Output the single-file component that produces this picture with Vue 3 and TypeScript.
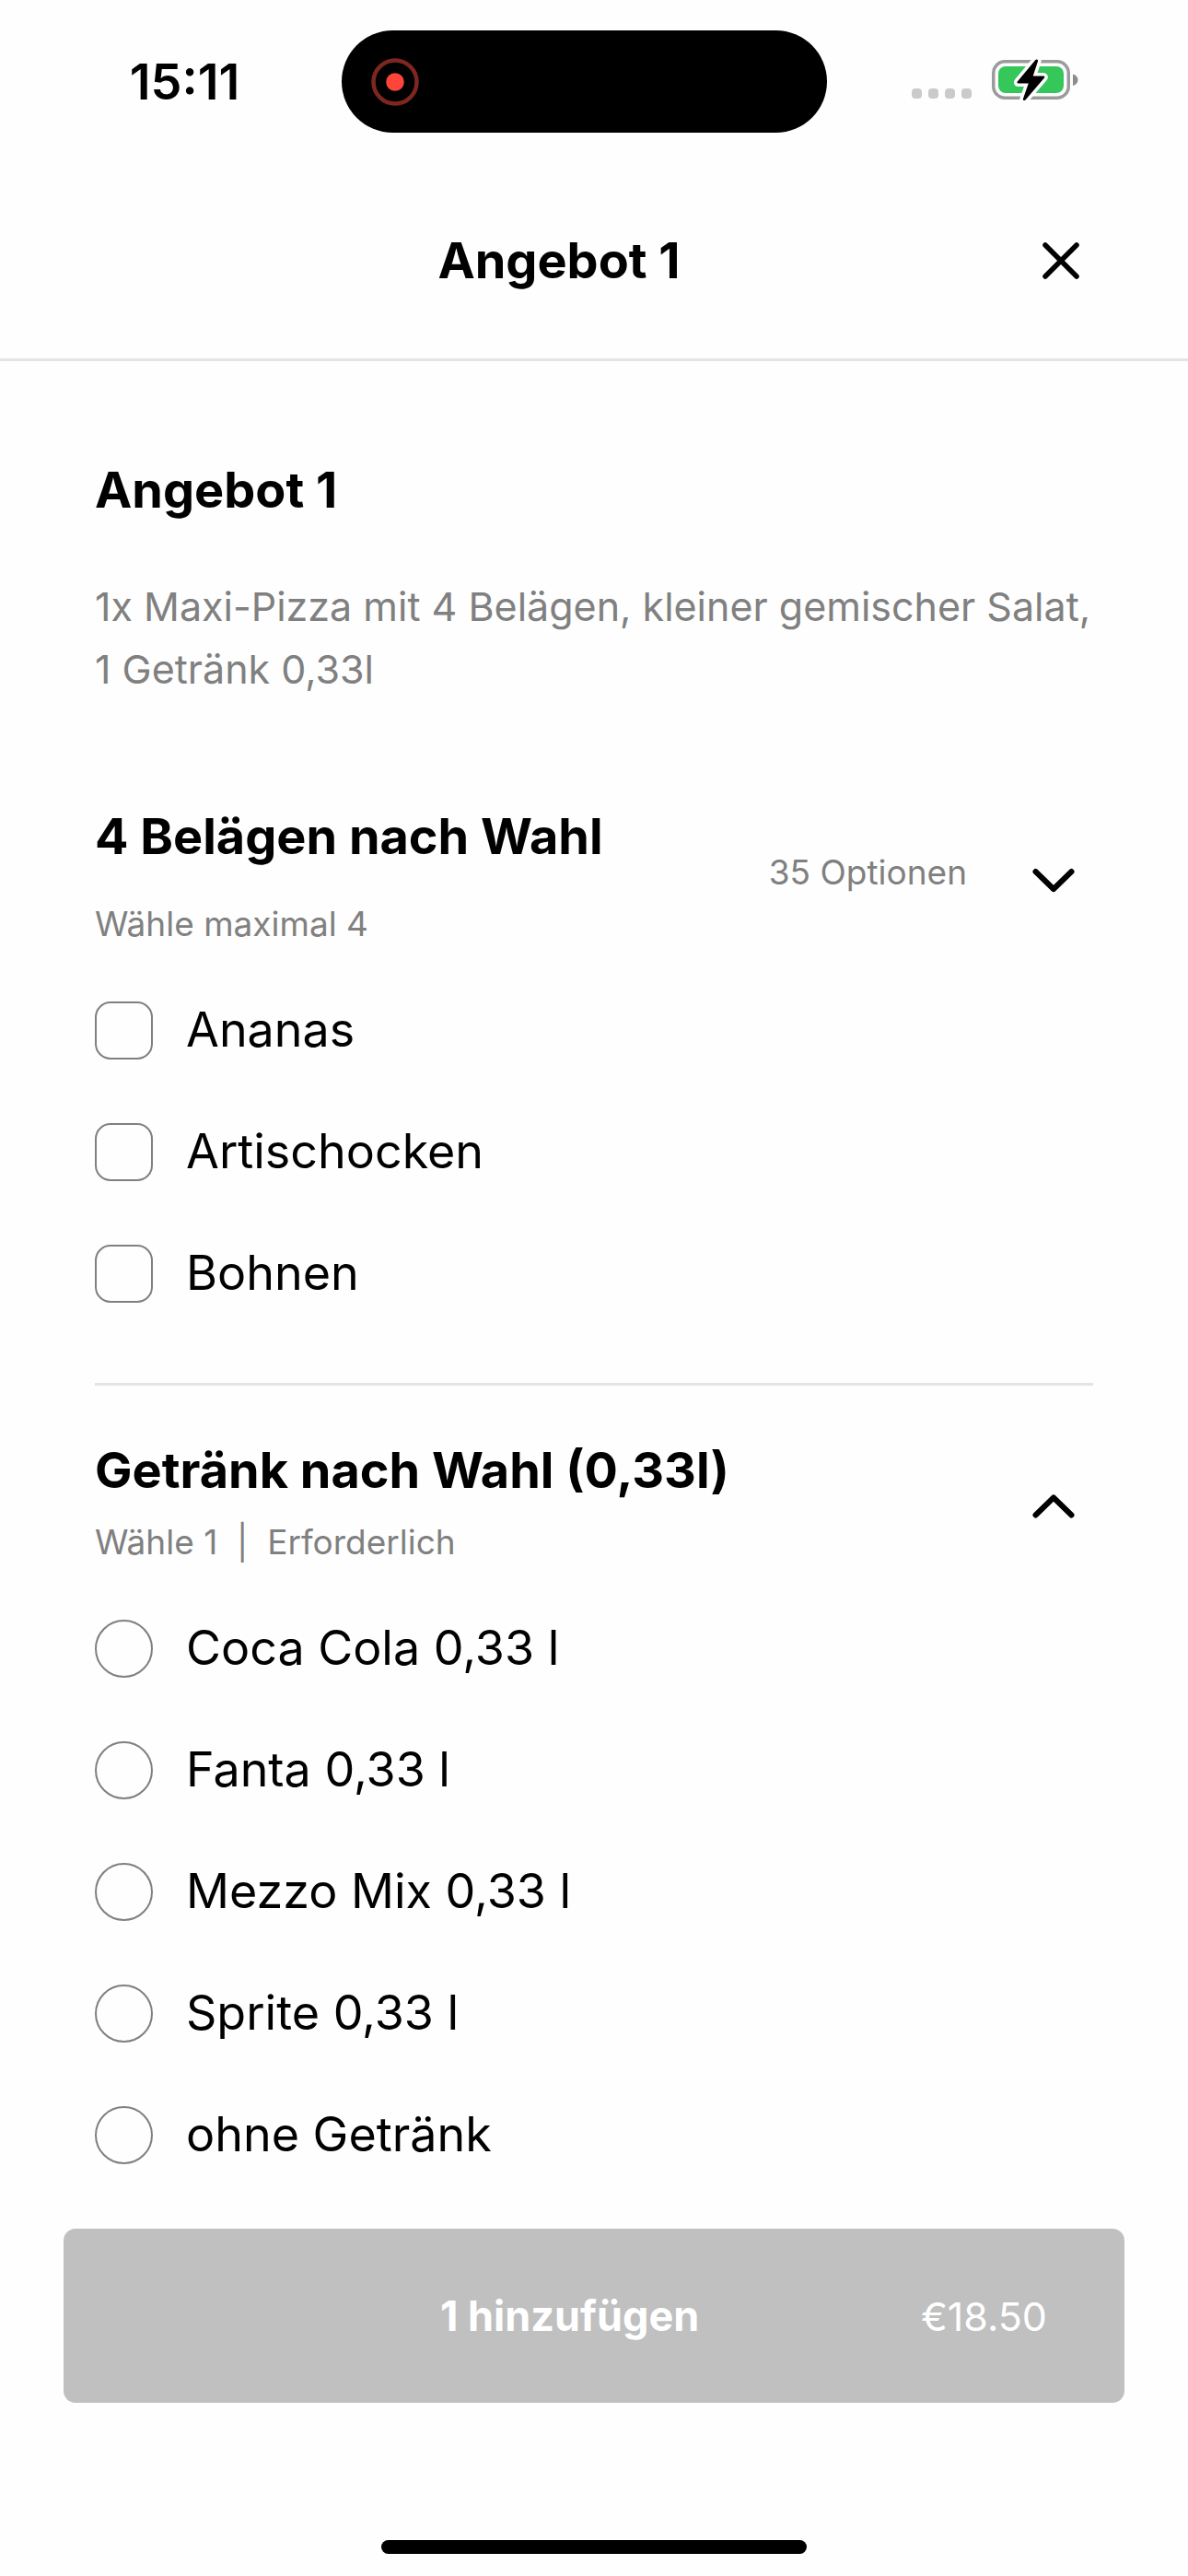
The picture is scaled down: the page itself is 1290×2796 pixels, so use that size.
<script setup lang="ts">
import { computed, ref } from 'vue'

interface OptionGroup {
  id: string
  title: string
  hint: string
  type: 'checkbox' | 'radio'
  count?: string
  expanded: boolean
  options: string[]
}

const groups = ref<OptionGroup[]>([
  {
    id: 'belaege',
    title: '4 Belägen nach Wahl',
    hint: 'Wähle maximal 4',
    type: 'checkbox',
    count: '35 Optionen',
    expanded: false,
    options: ['Ananas', 'Artischocken', 'Bohnen'],
  },
  {
    id: 'getraenk',
    title: 'Getränk nach Wahl (0,33l)',
    hint: 'Wähle 1\u00a0\u00a0|\u00a0\u00a0Erforderlich',
    type: 'radio',
    expanded: true,
    options: ['Coca Cola 0,33 l', 'Fanta 0,33 l', 'Mezzo Mix 0,33 l', 'Sprite 0,33 l', 'ohne Getränk'],
  },
])

const toppings = ref<string[]>([])
const drink = ref('')
const canAdd = computed(() => drink.value !== '')

const visible = (g: OptionGroup) => (g.expanded ? g.options : g.options.slice(0, 3))
</script>

<template>
  <div class="screen">
    <div class="status">
      <span class="time">15:11</span>
      <div class="island">
        <svg width="52" height="52" viewBox="0 0 52 52" aria-hidden="true">
          <circle cx="26" cy="26" r="23.5" fill="none" stroke="#7e2720" stroke-width="4.5" />
          <circle cx="26" cy="26" r="9.8" fill="#ff453a" />
        </svg>
      </div>
      <div class="indicators">
        <svg width="66" height="48" viewBox="0 0 66 48" fill="#cacaca" aria-hidden="true">
          <rect x="0" y="33" width="11" height="11" rx="4" />
          <rect x="18" y="33" width="11" height="11" rx="4" />
          <rect x="36" y="33" width="11" height="11" rx="4" />
          <rect x="54" y="33" width="11" height="11" rx="4" />
        </svg>
        <svg width="95" height="48" viewBox="0 0 95 48" aria-hidden="true">
          <rect x="1.75" y="3.75" width="81.5" height="39.5" rx="12.5" fill="none" stroke="#9b9b9b" stroke-width="3.5" />
          <rect x="7" y="9" width="71" height="29" rx="8" fill="#35c759" />
          <path d="M88 17.5c3.600 1.200 5.500 3.400 5.500 6.300s-1.900 5.200-5.500 6.400z" fill="#8c8c8c" />
          <path
            d="M47.200 2.200 27.800 25.600c-.8 1-.3 2 1 2h11l-5.800 16.300c-.7 2 1.400 3 2.700 1.400L57 21.600c.8-1 .3-2-1-2H44.700L50 3.600c.6-2-1.400-3-2.800-1.400z"
            fill="#000"
            stroke="#fefefe"
            stroke-width="7"
            stroke-linejoin="round"
            paint-order="stroke"
          />
        </svg>
      </div>
    </div>

    <header class="header">
      <h2 class="heading">Angebot 1</h2>
      <button type="button" class="close" aria-label="Schließen">
        <svg width="44" height="44" viewBox="0 0 44 44" fill="none" stroke="#000" stroke-width="5.500" stroke-linecap="round" aria-hidden="true">
          <path d="M5 5 39 39M39 5 5 39" />
        </svg>
      </button>
    </header>

    <main class="content">
      <h1 class="heading">Angebot 1</h1>
      <p class="description">1x Maxi-Pizza mit 4 Belägen, kleiner gemischer Salat, 1 Getränk 0,33l</p>

      <section v-for="g in groups" :key="g.id" class="group" :class="g.type">
        <div class="group-head">
          <div class="group-titles">
            <h3 :id="g.id" class="heading">{{ g.title }}</h3>
            <p class="hint">{{ g.hint }}</p>
          </div>
          <button type="button" class="toggle" :aria-expanded="g.expanded" :aria-labelledby="g.id" @click="g.expanded = !g.expanded">
            <span v-if="g.count" class="count">{{ g.count }}</span>
            <svg width="48" height="48" viewBox="0 0 48 48" fill="none" stroke="#000" stroke-width="6" stroke-linecap="round" stroke-linejoin="round" aria-hidden="true">
              <path :d="g.expanded ? 'M4.500 37.500 24 18.500 43.500 37.500' : 'M4.500 18 24 37 43.500 18'" />
            </svg>
          </button>
        </div>
        <ul class="options">
          <li v-for="o in visible(g)" :key="o">
            <label class="option">
              <input v-if="g.type === 'checkbox'" v-model="toppings" type="checkbox" :value="o" />
              <input v-else v-model="drink" type="radio" :name="g.id" :value="o" />
              <span>{{ o }}</span>
            </label>
          </li>
        </ul>
      </section>
    </main>

    <footer class="footer">
      <button type="button" class="add" :disabled="!canAdd">
        <span class="add-label">1 hinzufügen</span>
        <span class="price">€18.50</span>
      </button>
      <div class="home"></div>
    </footer>
  </div>
</template>

<style>
body {
  margin: 0;
  background: #fefefe;
}
</style>

<style scoped>
.screen {
  display: flex;
  flex-direction: column;
  min-height: 100vh;
  box-sizing: border-box;
  background: #fefefe;
  color: #000;
  font-family: Inter, 'Liberation Sans', sans-serif;
}

h1,
h2,
h3,
p,
ul {
  margin: 0;
  padding: 0;
}

button {
  margin: 0;
  padding: 0;
  border: 0;
  background: none;
  color: inherit;
  font: inherit;
}

svg {
  display: block;
  flex: none;
}

.status {
  display: grid;
  grid-template-columns: minmax(0, 371fr) 527px minmax(0, 392fr);
  align-items: center;
  height: 111px;
  padding: 33px 0;
}

.time {
  padding-left: 30px;
  text-align: center;
  font-size: 54px;
  font-weight: 600;
  line-height: 64px;
}

.island {
  display: flex;
  align-items: center;
  height: 111px;
  box-sizing: border-box;
  padding-left: 32px;
  border-radius: 56px;
  background: #000;
}

.indicators {
  display: flex;
  gap: 21px;
  padding: 0 0 4px 92px;
}

.header {
  display: flex;
  align-items: center;
  height: 212px;
  padding: 0 68px 0 132px;
  border-bottom: 3px solid #e4e4e4;
}

.header .heading {
  flex: 1;
  text-align: center;
}

.heading {
  font-size: 54px;
  font-weight: 700;
  line-height: 64px;
}

.close {
  display: flex;
  align-items: center;
  justify-content: center;
  width: 140px;
  height: 140px;
}

.content {
  padding: 108px 103px 0;
}

.description {
  margin-top: 60px;
  color: #808080;
  font-size: 43px;
  line-height: 68px;
}

.group-head {
  display: flex;
  align-items: center;
  justify-content: space-between;
}

.group.checkbox {
  padding: 116px 0 53px;
  border-bottom: 3px solid #e4e4e4;
}

.group.radio {
  padding-top: 60px;
}

.hint,
.count {
  color: #808080;
  font-size: 37px;
  line-height: 48px;
}

.checkbox .hint {
  margin-top: 39px;
}

.radio .hint {
  margin-top: 22px;
}

.toggle {
  display: flex;
  align-items: center;
  gap: 70px;
  padding-right: 19px;
}

.count {
  padding-bottom: 10px;
}

.options {
  margin-top: 25px;
  list-style: none;
}

.option {
  display: flex;
  align-items: center;
  gap: 36px;
  height: 132px;
  font-size: 52px;
  line-height: 64px;
}

.option input {
  appearance: none;
  flex: none;
  width: 63px;
  height: 63px;
  margin: 0;
  border: 2px solid #808080;
  border-radius: 17px;
  background: #fefefe;
}

.option input[type='radio'] {
  border-radius: 50%;
}

.option input:checked {
  box-shadow: inset 0 0 0 12px #fefefe;
  background: #000;
}

.footer {
  display: flex;
  flex-direction: column;
  margin-top: auto;
  padding: 36px 69px 24px;
}

.add {
  display: flex;
  align-items: center;
  height: 189px;
  padding: 0 84px 0 168px;
  border-radius: 13px;
  background: #000;
  color: #fff;
  font-size: 43px;
  line-height: 64px;
}

.add:disabled {
  background: #c0c0c0;
}

.add-label {
  flex: 1;
  font-size: 45px;
  font-weight: 700;
}

.home {
  align-self: center;
  width: 462px;
  height: 15px;
  margin-top: 149px;
  border-radius: 8px;
  background: #000;
}
</style>
